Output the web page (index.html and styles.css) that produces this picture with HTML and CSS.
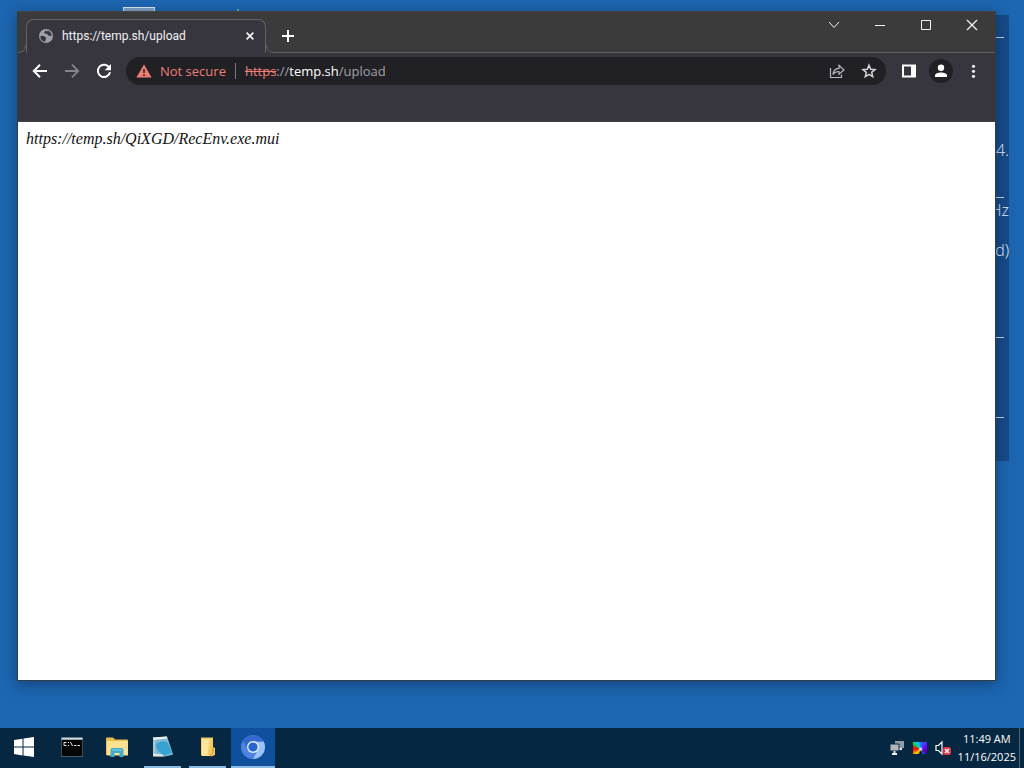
FILE: index.html
```html
<!DOCTYPE html>
<html lang="en">
<head>
<meta charset="utf-8">
<title>Desktop</title>
<link rel="stylesheet" href="styles.css">
</head>
<body>
<main class="desktop">
  <div class="shortcut"></div>
  <span class="speck"></span>
  <aside class="sysinfo">
    <span class="rule rule-1"></span>
    <span class="info info-1">4.</span>
    <span class="rule rule-2"></span>
    <span class="info info-2">Hz</span>
    <span class="info info-3">d)</span>
    <span class="rule rule-3"></span>
    <span class="rule rule-4"></span>
  </aside>
  <section class="window">
    <header class="titlebar">
      <svg class="curve" viewBox="0 0 8 8"><path class="fill" d="M0 8Q8 8 8 0V8z"/><path d="M0 7.500Q7.500 7.500 7.500 0"/></svg>
      <div class="tab">
        <svg class="globe" viewBox="0 0 16 16"><circle cx="8" cy="8" r="7" fill="#9da1a6"/><path d="M2.500 8l3.500 0 2.500 2.200-1 1.100v2.200C4.500 13.800 2 11.500 2.500 8zM7.500 2.500L6 4.500l1.500 1.300h1.800l.7 1.700 3.500.5c.3-2.500-1.500-5-4-5.500l-.5 1.200z" fill="#37363e"/></svg>
        <span class="tab-title">https://temp.sh/upload</span>
        <button class="tab-close" aria-label="Close tab"><svg viewBox="0 0 8 8"><path d="M.6.600l6.800 6.800M7.400.600L.600 7.400" stroke="#f4f4f5" stroke-width="1.700"/></svg></button>
      </div>
      <svg class="curve" viewBox="0 0 8 8"><path class="fill" d="M8 8Q0 8 0 0V8z"/><path d="M8 7.500Q.5 7.500 .5 0"/></svg>
      <div class="strip">
        <button class="new-tab" aria-label="New tab"><svg viewBox="0 0 12 12"><path d="M6 0v12M0 6h12" stroke="#fff" stroke-width="2"/></svg></button>
        <div class="controls">
          <button aria-label="Search tabs"><svg viewBox="0 0 12 12"><path d="M1 3l5 5.500L11 3"/></svg></button>
          <button aria-label="Minimize"><svg viewBox="0 0 12 12"><path d="M1 6.500h10"/></svg></button>
          <button aria-label="Maximize"><svg viewBox="0 0 12 12"><path d="M1.500 1.500h9v9h-9z"/></svg></button>
          <button aria-label="Close"><svg viewBox="0 0 12 12"><path d="M1 1l10 10M11 1L1 11" stroke-width="1.300"/></svg></button>
        </div>
      </div>
    </header>
    <nav class="toolbar">
      <button aria-label="Back"><svg viewBox="0 0 16 16"><path d="M15 8H2M8 1.700L1.800 8 8 14.300" stroke="#fff" stroke-width="2"/></svg></button>
      <button aria-label="Forward"><svg viewBox="0 0 16 16"><path d="M1 8h13M8 1.700L14.200 8 8 14.300" stroke="#85848b" stroke-width="1.800"/></svg></button>
      <button aria-label="Reload"><svg viewBox="0 0 16 16"><path d="M13.300 4.500A6.200 6.200 0 1 0 14.100 9.300" stroke="#fff" stroke-width="2"/><path d="M15 1v6.300H8.700z" fill="#fff"/></svg></button>
      <div class="omnibox">
        <button class="security"><svg viewBox="0 0 16 14"><path d="M8 .5L15.600 13.500H.4z" fill="#ee7e78"/><path d="M8 5v4M8 10.200v1.800" stroke="#3b1f24" stroke-width="1.600"/></svg>Not secure</button>
        <div class="url" role="textbox" aria-label="Address" contenteditable="true" spellcheck="false"><s>https</s>://<b>temp.sh</b>/upload</div>
        <button aria-label="Share"><svg viewBox="0 0 16 16"><path d="M1.500 5v9.500h11v-3M4 11.500c.4-4 2.500-6 6-6.200V2.300L15 7l-5 4.300V8.500c-2.700 0-4.600.9-6 3z" stroke="#b8b8be" stroke-width="1.200"/></svg></button>
        <button aria-label="Bookmark"><svg viewBox="0 0 16 16"><path d="M8 2.200l1.700 4 4.300.4-3.300 2.800 1 4.300L8 11.400l-3.700 2.300 1-4.300L2 6.600l4.300-.4z" stroke="#d5d5da" stroke-width="1.500"/></svg></button>
      </div>
      <button aria-label="Side panel"><svg viewBox="0 0 16 16"><path d="M1 1.500h14v13H1z" fill="#fff"/><path d="M3 3.500h7v9H3z" fill="#37363e"/></svg></button>
      <button class="profile" aria-label="Profile"><svg viewBox="0 0 16 16"><circle cx="8" cy="4.800" r="3.200" fill="#fff"/><path d="M2 14v-1.500C2 8.500 14 8.500 14 12.500V14z" fill="#fff"/></svg></button>
      <button aria-label="Menu"><svg viewBox="0 0 16 16"><g fill="#e8e8ea"><circle cx="8.500" cy="3.300" r="1.600"/><circle cx="8.500" cy="8.300" r="1.600"/><circle cx="8.500" cy="13.300" r="1.600"/></g></svg></button>
    </nav>
    <div class="bookmarks"></div>
    <article class="page">https://temp.sh/QiXGD/RecEnv.exe.mui</article>
  </section>
</main>
<footer class="taskbar">
  <button class="task start" aria-label="Start"><svg viewBox="0 0 24 24"><path d="M2 5l8.500-1.300v7.800H2zM11.500 3.500L22 2v9.500H11.500zM2 12.500h8.500v7.900L2 19.100zM11.500 12.500H22V22l-10.500-1.500z" fill="#fff"/></svg></button>
  <button class="task" aria-label="Command Prompt"><svg viewBox="0 0 24 24"><path d="M1 2.500h22v19H1z" fill="#87929b"/><path d="M1.500 5h21v16h-21z" fill="#050505"/><path d="M2 3.500h20" stroke="#d3d8dc" stroke-width="1.500"/><path d="M6.500 7.500H4v3h2.500M8.500 7v1M8.500 10v1M10.500 7l2 4M14 10.500h2.500M17.500 10.500H20" stroke="#e5e5e5"/></svg></button>
  <button class="task" aria-label="File Explorer"><svg viewBox="0 0 24 24"><path d="M1 3.500q0-1 1-1h6l2 2h12q1 0 1 1V20H1z" fill="#e9bd50"/><path d="M2 6h21v14.500H2z" fill="#fbe291"/><path d="M5.500 22v-7q0-2 2-2h9q2 0 2 2v7h-4v-4h-5v4z" fill="#44aacb"/><path d="M7 15h10" stroke="#7bd2e4"/></svg></button>
  <button class="task running" aria-label="Notepad"><svg viewBox="0 0 24 24"><path d="M2 2.500l14-1 6 18-8 2-12-.5z" fill="#a9c6d4"/><path d="M4 3l12-.5 5 17-7 1.500-10-1z" fill="#7bb9d8"/><path d="M5 9q6-5 12-1l4 10-7 2.500q-9-3-9-11.500z" fill="#36a3d2"/><path d="M2 2.500l14-1v2L3 5z" fill="#e9eef0"/><path d="M2 18.500l10 1v2H2z" fill="#e4e7e6"/></svg></button>
  <button class="task running" aria-label="Folder"><svg viewBox="0 0 24 24"><path d="M5 2.500h12v18H5z" fill="#f3cd68"/><path d="M6 4h8v17H6z" fill="#ffe69a"/><path d="M14 4l3-1v9l2 1v7l-4 1.500-3-2V16z" fill="#f5cb61"/><path d="M17 12v6l-3 3" stroke="#c68d24"/></svg></button>
  <button class="task running active" aria-label="Chromium"><svg viewBox="0 0 24 24"><circle cx="12" cy="12" r="12" fill="#4d84e3"/><path d="M12 6.500h10.600A12 12 0 0 1 12 24l5-9.200z" fill="#9dc1fa"/><path d="M1.700 6A12 12 0 0 1 22.500 6.500H12L7 14.500z" fill="#3568cf"/><circle cx="12" cy="12" r="6" fill="#e4efff"/><circle cx="12" cy="12" r="4.600" fill="#2864cd"/></svg></button>
  <div class="tray">
    <svg viewBox="0 0 16 16"><path d="M6 1h9v7H6z" fill="#929ba2"/><path d="M9 9h4" stroke="#e8edf0" stroke-width="2"/><path d="M1 4h9v7H1z" fill="#b2b7ba" stroke="#082b48"/><path d="M5.500 11v2.500M3 14h5" stroke="#f5f5f5" stroke-width="1.800"/></svg>
    <div class="colors"></div>
    <svg viewBox="0 0 16 16"><path d="M1 5.500h2.500L7 2v12l-3.500-3.500H1z" stroke="#fff" stroke-width="1.200"/><rect x="8" y="7" width="8" height="8" rx="2" fill="#df3445"/><path d="M10 9l4 4M14 9l-4 4" stroke="#fff" stroke-width="1.400"/></svg>
  </div>
  <time class="clock"><span>11:49 AM</span><span>11/16/2025</span></time>
  <button class="peek" aria-label="Show desktop"></button>
</footer>
</body>
</html>
```
FILE: styles.css
```css
* { box-sizing: border-box; }
body {
  margin: 0;
  height: 100vh;
  display: flex;
  flex-direction: column;
  overflow: hidden;
  background: #1d66b1;
  color: #fff;
  font: 12px/18px "Open Sans", "Noto Sans", sans-serif;
}
button {
  display: flex;
  align-items: center;
  justify-content: center;
  padding: 0;
  border: 0;
  background: none;
  color: inherit;
  font: inherit;
}
svg { display: block; flex: none; width: 16px; height: 16px; fill: none; }

.desktop { position: relative; flex: 1; display: flex; min-height: 0; padding: 11px 28px 47px 17px; }
.shortcut { position: absolute; left: 123px; top: 7px; width: 32px; height: 8px; border: 1px solid #e5edf2; background: #82a9cc; }
.speck { position: absolute; left: 237px; top: 9px; width: 2px; height: 2px; background: #6cac8b; }

.sysinfo { position: absolute; right: 15px; top: 15px; width: 40px; height: 446px; background: #174b88; }
.info { position: absolute; right: 0; color: #eef6fc; font: 16px/20px "Open Sans", sans-serif; font-weight: 300; }
.info-1 { top: 125px; }
.info-2 { top: 185px; }
.info-3 { top: 225px; }
.rule { position: absolute; right: 5px; width: 20px; height: 1px; background: #c6dff0; }
.rule-1 { top: 22px; }
.rule-2 { top: 182px; }
.rule-3 { top: 322px; }
.rule-4 { top: 402px; }

.window {
  position: relative;
  flex: 1;
  display: flex;
  flex-direction: column;
  min-width: 0;
  border: 1px solid #333b45;
  border-top-color: #474340;
  background: #37363e;
  box-shadow: 0 3px 14px rgba(8, 30, 62, .5);
}
.titlebar { display: flex; align-items: flex-end; height: 41px; background: #3c3b3b; }
.curve { width: 8px; height: 8px; }
.curve path { stroke: #626166; }
.curve .fill { fill: #37363e; stroke: none; }
.tab {
  display: flex;
  align-items: center;
  width: 240px;
  height: 34px;
  padding: 0 10px 2px 11px;
  border: 1px solid #626166;
  border-bottom: 0;
  border-radius: 8px 8px 0 0;
  background: #37363e;
}
.tab-title { flex: 1; margin-left: 8px; color: #f2f2f4; font-family: Roboto, sans-serif; white-space: nowrap; }
.tab-close { width: 10px; height: 16px; }
.tab-close svg { width: 8px; height: 8px; }
.strip { flex: 1; display: flex; justify-content: space-between; align-self: stretch; border-bottom: 1px solid #626166; }
.new-tab { width: 28px; height: 28px; margin-top: 10px; }
.new-tab svg { width: 12px; height: 12px; }
.controls { display: flex; height: 26px; }
.controls button { width: 46px; }
.controls svg { width: 12px; height: 12px; stroke: #f4f4f4; }

.toolbar { display: flex; align-items: center; gap: 8px; height: 36px; padding: 0 10px; }
.toolbar > button { width: 24px; height: 28px; }
.omnibox {
  flex: 1;
  display: flex;
  align-items: center;
  gap: 8px;
  height: 28px;
  margin: 0 3px 0 2px;
  padding: 0 5px 0 10px;
  border-radius: 14px;
  background: #202025;
  font-size: 13px;
}
.omnibox > button { width: 24px; height: 24px; }
.omnibox > .security { width: auto; height: 16px; gap: 8px; padding-right: 9px; border-right: 1px solid #77777c; color: #ee7e78; }
.security svg { height: 14px; }
.url { flex: 1; padding-left: 1px; color: #a2a2a8; white-space: nowrap; outline: 0; }
.url s { color: #ee7e78; }
.url b { color: #fff; font-weight: 400; }
.toolbar > .profile { height: 24px; border-radius: 50%; background: #202025; }
.bookmarks { height: 33px; border-bottom: 1px solid #454349; }
.page { flex: 1; padding: 8px; background: #fff; color: #111; font: italic 16px/18px "Liberation Serif", serif; }

.taskbar { display: flex; height: 40px; background: #052742; }
.task { width: 44px; margin-right: 1px; border-bottom: 2px solid transparent; }
.start { width: 48px; }
.task svg { width: 24px; height: 24px; }
.taskbar > .start { margin-right: 2px; }
.running { width: 37px; margin: 0 4px; border-bottom-color: #8bbce5; }
.active { width: 44px; margin: 0 1px; background: #0e509b; }
.tray { display: flex; align-items: center; gap: 8px; margin-left: auto; }
.colors {
  width: 14px;
  height: 12px;
  background: radial-gradient(circle at 55% 60%, #fff, transparent 25%), conic-gradient(at 55% 60%, #36f, #60f 20%, #509 35%, #15f 42%, #000 50%, #fd0 62%, #f30 72%, #f00 78%, #0d5 86%, #0cf 93%, #36f);
}
.clock { display: flex; flex-direction: column; align-items: center; justify-content: center; margin: 0 3px 0 7px; font-size: 11px; }
.peek { width: 5px; border-left: 1px solid #4b6478; }
```
